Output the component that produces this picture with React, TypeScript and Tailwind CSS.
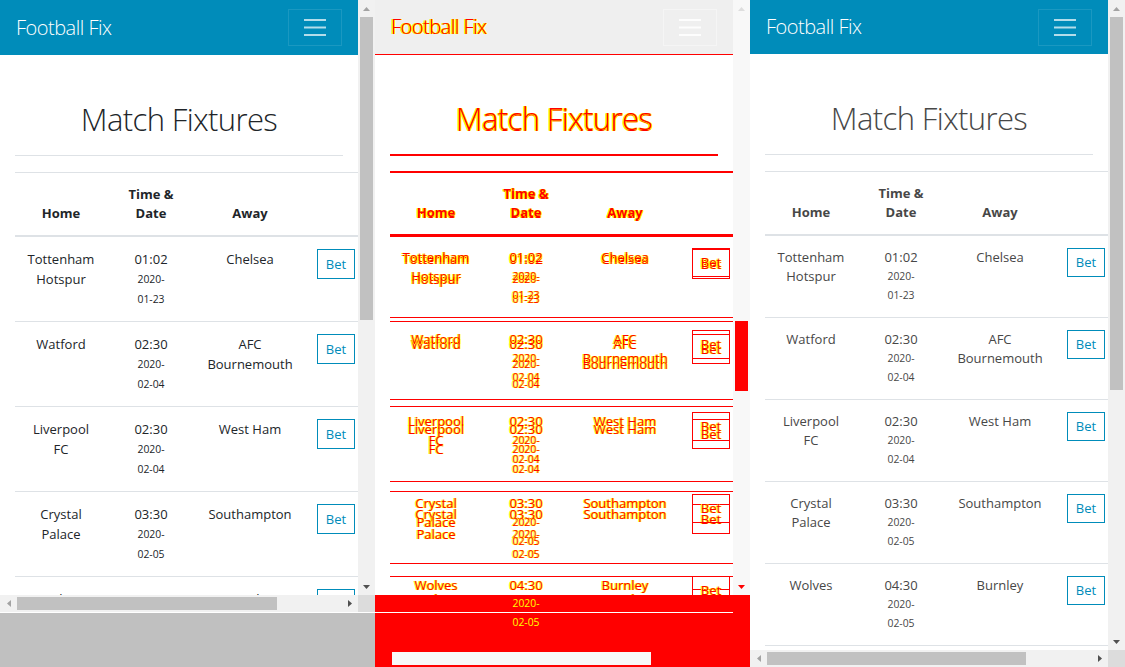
// Visual-regression style view: reference page, pixel diff, test page.

type Side = 'a' | 'b';
type Dir = 'up' | 'down' | 'left' | 'right';

const fixtures = [
  { home: ['Tottenham', 'Hotspur'], time: '01:02', date: '01-23', away: ['Chelsea'] },
  { home: ['Watford'], time: '02:30', date: '02-04', away: ['AFC', 'Bournemouth'] },
  { home: ['Liverpool', 'FC'], time: '02:30', date: '02-04', away: ['West Ham'] },
  { home: ['Crystal', 'Palace'], time: '03:30', date: '02-05', away: ['Southampton'] },
  { home: ['Wolves'], time: '04:30', date: '02-05', away: ['Burnley'] },
  { home: ['Arsenal'], time: '05:30', date: '02-06', away: ['Everton'] },
];

const DIFF_INK = 'text-[#ff0000] [text-shadow:1px_0_0_#ffff00,-1px_0_0_#ffff00]';

const metrics = {
  a: { nav: 'h-[55px]', lh: 'leading-[20px]', btn: 'h-[30px]', ink: 'text-[#212529]' },
  b: { nav: 'h-[54px]', lh: 'leading-[19px]', btn: 'h-[29px]', ink: 'text-[#474747]' },
};

function Tri({ dir, color }: { dir: Dir; color: string }) {
  const pts = {
    up: '0,4 3.5,0 7,4',
    down: '0,0 7,0 3.5,4',
    left: '4,0 4,7 0,3.5',
    right: '0,0 0,7 4,3.5',
  }[dir];
  const vertical = dir === 'up' || dir === 'down';
  return (
    <svg width={vertical ? 7 : 4} height={vertical ? 4 : 7}>
      <polygon points={pts} fill={color} />
    </svg>
  );
}

function Toggler({ faded = false }: { faded?: boolean }) {
  return (
    <div
      className={`flex h-[37px] w-[54px] items-center justify-center border ${
        faded ? 'border-[#f5f5f5]' : 'border-white/10'
      }`}
    >
      <svg width="22" height="17" viewBox="0 0 22 17">
        <path
          d="M0 1h22M0 8.5h22M0 16h22"
          stroke={faded ? '#fdfdfd' : 'rgba(255,255,255,0.7)'}
          strokeWidth="2"
        />
      </svg>
    </div>
  );
}

function Page({ side, diff = false }: { side: Side; diff?: boolean }) {
  const m = metrics[side];
  const ink = diff ? DIFF_INK : m.ink;
  const rule = diff ? 'border-[#ff0000]' : 'border-[#dee2e6]';
  const navBg = diff ? (side === 'a' ? 'bg-[#efefef] border-b border-[#ff0000]' : '') : 'bg-[#008cba]';
  const bet = diff ? `border-[#ff0000] ${DIFF_INK}` : 'border-[#008cba] text-[#008cba]';

  return (
    <div className="w-[358px] font-['Open_Sans',sans-serif] text-[13px]">
      <nav className={`${m.nav} ${navBg} flex items-center justify-between px-[16px]`}>
        <span
          className={`text-[20px] font-light leading-[24px] tracking-[-0.5px] ${diff ? DIFF_INK : 'text-white'}`}
        >
          Football Fix
        </span>
        {(!diff || side === 'a') && <Toggler faded={diff} />}
      </nav>

      <div className="px-[15px]">
        <h2 className={`mt-[45px] text-center text-[31px] font-light leading-[38px] tracking-[-0.6px] ${ink}`}>
          Match Fixtures
        </h2>
        <div className={`mt-[17px] border-t ${rule}`} />

        <div className={`mt-[16px] w-[352px] border-t ${rule}`}>
          <div className={`flex items-end border-b-2 ${rule} font-bold leading-[19px] ${ink}`}>
            <div className="w-[92px] p-[12px] text-center">Home</div>
            <div className="w-[88px] p-[12px] text-center">
              Time &amp;
              <br />
              Date
            </div>
            <div className="w-[110px] p-[12px] text-center">Away</div>
            <div className="w-[62px]" />
          </div>

          {fixtures.map((f, i) => (
            <div key={i} className={`flex ${i ? `border-t ${rule}` : ''} ${m.lh} ${ink}`}>
              <div className="w-[92px] p-[12px] text-center">
                {f.home.map(l => (
                  <div key={l}>{l}</div>
                ))}
              </div>
              <div className="w-[88px] p-[12px] text-center">
                <div>{f.time}</div>
                <div className="text-[10.4px]">2020-</div>
                <div className="text-[10.4px]">{f.date}</div>
              </div>
              <div className="w-[110px] p-[12px] text-center">
                {f.away.map(l => (
                  <div key={l}>{l}</div>
                ))}
              </div>
              <div className="w-[62px] p-[12px]">
                <div className={`flex w-[38px] ${m.btn} items-center justify-center border leading-none ${bet}`}>
                  Bet
                </div>
              </div>
            </div>
          ))}
        </div>
      </div>
    </div>
  );
}

function VScroll({ thumb }: { thumb: string }) {
  return (
    <div className="flex w-[17px] flex-col bg-[#f1f1f1]">
      <div className="flex h-[17px] items-center justify-center">
        <Tri dir="up" color="#a3a3a3" />
      </div>
      <div className={`mx-[2px] ${thumb} bg-[#c1c1c1]`} />
      <div className="flex-1" />
      <div className="flex h-[17px] items-center justify-center">
        <Tri dir="down" color="#505050" />
      </div>
    </div>
  );
}

function HScroll({ thumb }: { thumb: string }) {
  return (
    <div className="flex h-[17px] w-[375px]">
      <div className="flex w-[358px] items-center bg-[#f1f1f1]">
        <div className="flex h-full w-[17px] items-center justify-center">
          <Tri dir="left" color="#a3a3a3" />
        </div>
        <div className={`h-[13px] ${thumb} bg-[#c1c1c1]`} />
        <div className="flex-1" />
        <div className="flex h-full w-[17px] items-center justify-center">
          <Tri dir="right" color="#505050" />
        </div>
      </div>
      <div className="w-[17px] bg-[#dcdcdc]" />
    </div>
  );
}

function ReferencePanel() {
  return (
    <div className="flex w-[375px] flex-col">
      <div className="flex h-[595px]">
        <div className="w-[358px] overflow-hidden bg-white">
          <Page side="a" />
        </div>
        <VScroll thumb="h-[303px]" />
      </div>
      <HScroll thumb="w-[260px]" />
      <div className="h-[1px] bg-white" />
      <div className="flex-1 bg-[#c0c0c0]" />
    </div>
  );
}

function DiffPanel() {
  return (
    <div className="flex w-[375px] flex-col">
      <div className="flex h-[595px]">
        <div className="relative w-[358px] overflow-hidden bg-white">
          <Page side="a" diff />
          <div className="absolute left-0 top-0">
            <Page side="b" diff />
          </div>
        </div>
        <div className="flex w-[17px] flex-col bg-[#f8f8f8]">
          <div className="flex h-[17px] items-center justify-center">
            <Tri dir="up" color="#dedede" />
          </div>
          <div className="h-[304px]" />
          <div className="mx-[2px] h-[70px] bg-[#ff0000]" />
          <div className="flex-1" />
          <div className="flex h-[17px] items-center justify-center">
            <Tri dir="down" color="#ff0000" />
          </div>
        </div>
      </div>
      <div className="flex flex-1 flex-col bg-[#ff0000] font-['Open_Sans',sans-serif] text-[10.4px] text-[#ffff00]">
        <div className="flex h-[17px] items-center">
          <div className="ml-[107px] w-[88px] text-center">2020-</div>
        </div>
        <div className="h-[1px] w-[358px] bg-white" />
        <div className="flex h-[20px] items-center">
          <div className="ml-[107px] w-[88px] text-center">02-05</div>
        </div>
        <div className="ml-[17px] mt-[19px] h-[13px] w-[259px] bg-[#f8f8f8]" />
      </div>
    </div>
  );
}

function TestPanel() {
  return (
    <div className="flex w-[375px] flex-col">
      <div className="flex h-[650px]">
        <div className="w-[358px] overflow-hidden bg-white">
          <Page side="b" />
        </div>
        <VScroll thumb="h-[373px]" />
      </div>
      <HScroll thumb="w-[259px]" />
    </div>
  );
}

export default function App() {
  return (
    <div className="flex h-[667px] w-[1125px] overflow-hidden bg-white">
      <ReferencePanel />
      <DiffPanel />
      <TestPanel />
    </div>
  );
}
